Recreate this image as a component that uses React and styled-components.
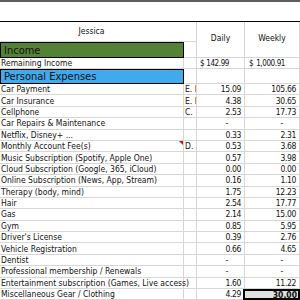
import React from 'react';
import styled, { createGlobalStyle } from 'styled-components';

const GlobalStyle = createGlobalStyle`
  *, *::before, *::after { box-sizing: border-box; }
  html, body { margin: 0; padding: 0; background: #fff; }
  body { font-family: "Liberation Sans Narrow", "DejaVu Sans Condensed", "Liberation Sans", sans-serif; }
`;

const COLS = '184px 13px 48px 55px';
const GRID = '#d6d6d6';

const Sheet = styled.div`
  width: 300px;
  height: 300px;
  overflow: hidden;
  background: #fff;
  color: #111;
  font-size: 8.5px;
`;

const TopStrip = styled.div`
  height: 22px;
  border-top: 2px solid #5c5c5c;
  border-bottom: 1px solid #000;
`;

const Header = styled.div`
  display: grid;
  grid-template-columns: ${COLS};
  grid-template-rows: 20px 16px;
`;

const Row = styled.div`
  display: grid;
  grid-template-columns: ${COLS};
  height: ${p => p.$h || '11.4px'};
`;

const Cell = styled.div`
  position: relative;
  display: flex;
  align-items: center;
  white-space: nowrap;
  overflow: ${p => (p.$spill ? 'visible' : 'hidden')};
  border-right: 1px solid ${GRID};
  border-bottom: 1px solid ${GRID};
  padding: 0 1px;
`;

const Title = styled(Cell)`
  justify-content: center;
  padding-right: 14px;
  padding-bottom: 2px;
`;

const ColHead = styled(Cell)`
  justify-content: center;
  padding-bottom: 3px;
`;

const Band = styled(Cell)`
  background: ${p => p.$color};
  border: 1px solid #000;
  font-family: "DejaVu Sans Condensed", "Liberation Sans Narrow", sans-serif;
  font-size: 11px;
  padding-left: 3px;
`;

const Note = styled(Cell)`
  padding-left: 1px;
`;

const Num = styled(Cell)`
  justify-content: flex-end;
  letter-spacing: -0.35px;
  padding-right: ${p => (p.$acct ? '16px' : '3px')};
`;

/* accounting format: currency sign pinned left, amount right with trailing gap */
const Money = styled(Cell)`
  justify-content: space-between;
  font-size: 8px;
  letter-spacing: -0.4px;
  padding-left: ${p => p.$pl};
  padding-right: ${p => p.$pr};
`;

const Total = styled(Num)`
  background: #e0e0e0;
  border: 2px solid #000;
  margin-left: -2px;
  font-weight: bold;
  letter-spacing: 0;
  padding-right: 1px;
`;

const CommentMark = styled.span`
  position: absolute;
  top: 0;
  right: 0;
  width: 0;
  height: 0;
  border-top: 4px solid #d0021b;
  border-left: 4px solid transparent;
`;

const expenses = [
  ['Car Payment', 'E. I', '15.09', '105.66'],
  ['Car Insurance', 'E. I', '4.38', '30.65'],
  ['Cellphone', 'C.', '2.53', '17.73'],
  ['Car Repairs & Maintenance', '', '-', '-'],
  ['Netflix, Disney+ ...', '', '0.33', '2.31'],
  ['Monthly Account Fee(s)', 'D.', '0.53', '3.68', true],
  ['Music Subscription (Spotify, Apple One)', '', '0.57', '3.98'],
  ['Cloud Subscription (Google, 365, iCloud)', '', '0.00', '0.00'],
  ['Online Subscription (News, App, Stream)', '', '0.16', '1.10'],
  ['Therapy (body, mind)', '', '1.75', '12.23'],
  ['Hair', '', '2.54', '17.77'],
  ['Gas', '', '2.14', '15.00'],
  ['Gym', '', '0.85', '5.95'],
  ["Driver's License", '', '0.39', '2.76'],
  ['Vehicle Registration', '', '0.66', '4.65'],
  ['Dentist', '', '-', '-'],
  ['Professional membership / Renewals', '', '-', '-'],
  ['Entertainment subscription (Games, Live access)', '', '1.60', '11.22'],
];

export default function App() {
  return (
    <Sheet>
      <GlobalStyle />
      <TopStrip />
      <Header>
        <Title style={{ gridColumn: '1 / 3', gridRow: 1 }}>Jessica</Title>
        <Band $color="#548235" style={{ gridColumn: 1, gridRow: 2 }}>Income</Band>
        <Cell style={{ gridColumn: 2, gridRow: 2 }} />
        <ColHead style={{ gridColumn: 3, gridRow: '1 / 3' }}>Daily</ColHead>
        <ColHead style={{ gridColumn: 4, gridRow: '1 / 3' }}>Weekly</ColHead>
      </Header>
      <Row $h="11px">
        <Cell>Remaining Income</Cell>
        <Cell />
        <Money $pl="3px" $pr="15px"><span>$</span><span>142.99</span></Money>
        <Money $pl="4px" $pr="14px"><span>$</span><span>1,000.91</span></Money>
      </Row>
      <Row $h="15px">
        <Band $color="#41a9ec">Personal Expenses</Band>
        <Cell />
        <Cell />
        <Cell />
      </Row>
      {expenses.map(([label, note, daily, weekly, comment]) => (
        <Row key={label}>
          <Cell $spill>
            {label}
            {comment && <CommentMark />}
          </Cell>
          <Note>{note}</Note>
          <Num $acct={daily === '-'}>{daily}</Num>
          <Num $acct={weekly === '-'}>{weekly}</Num>
        </Row>
      ))}
      <Row>
        <Cell>Miscellaneous Gear / Clothing</Cell>
        <Cell />
        <Num>4.29</Num>
        <Total>30.00</Total>
      </Row>
    </Sheet>
  );
}
